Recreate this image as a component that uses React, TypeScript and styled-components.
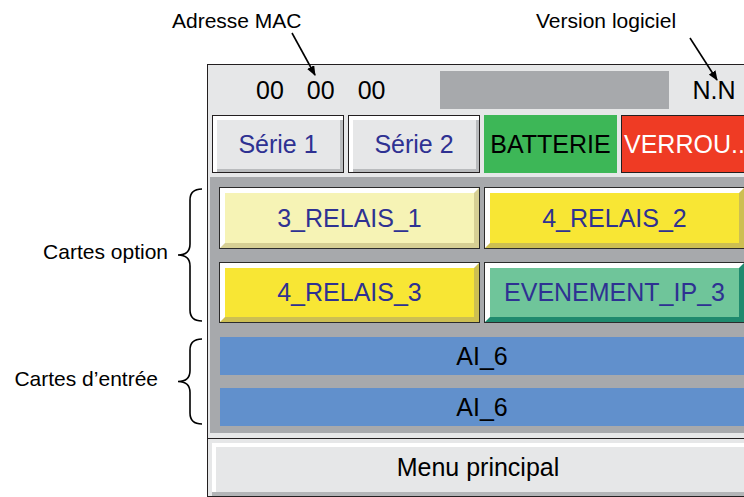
import styled, { createGlobalStyle } from "styled-components"

const Colors = {
    Screen: "#e6e7e8",
    Panel: "#a7a9ac",
    Line: "#231f20",
    Navy: "#2e3192",
    PaleYellow: "#f6f3b5",
    PaleYellowShade: "#d6cf94",
    Yellow: "#f8e634",
    YellowShade: "#cdbf52",
    Teal: "#6fc59a",
    TealShade: "#1f8a6e",
    Blue: "#6190cc",
    Green: "#3db757",
    Red: "#ef3b24",
    White: "#ffffff",
}

interface CardData {
    label: string
    fill: string
    shade: string
}

const optionCards: CardData[] = [
    { label: "3_RELAIS_1", fill: Colors.PaleYellow, shade: Colors.PaleYellowShade },
    { label: "4_RELAIS_2", fill: Colors.Yellow, shade: Colors.YellowShade },
    { label: "4_RELAIS_3", fill: Colors.Yellow, shade: Colors.YellowShade },
    { label: "EVENEMENT_IP_3", fill: Colors.Teal, shade: Colors.TealShade },
]

const inputCards = ["AI_6", "AI_6"]

function Brace({ height }: { height: number }) {
    const mid = height / 2
    return (
        <svg width="27" height={height} viewBox={`0 0 27 ${height}`}>
            <path
                d={`M26 1 C18 1 14 4 14 12 L14 ${mid - 11} C14 ${mid - 4} 10 ${mid} 2 ${mid} C10 ${mid} 14 ${mid + 4} 14 ${mid + 11} L14 ${height - 12} C14 ${height - 4} 18 ${height - 1} 26 ${height - 1}`}
                fill="none"
                stroke="#000"
                strokeWidth="1.6"
            />
        </svg>
    )
}

function App() {
    return (
        <>
            <GlobalStyle />
            <Page>
                <Callouts>
                    <CalloutLabel $left={172}>Adresse MAC</CalloutLabel>
                    <CalloutLabel $left={536}>Version logiciel</CalloutLabel>
                    <Arrows width="744" height="90" viewBox="0 0 744 90">
                        <defs>
                            <marker id="head" markerWidth="10" markerHeight="8" refX="9" refY="4" orient="auto" markerUnits="userSpaceOnUse">
                                <path d="M0 0 L10 4 L0 8 Z" fill="#000" />
                            </marker>
                        </defs>
                        <line x1="292" y1="33" x2="315" y2="75" stroke="#000" strokeWidth="1.6" markerEnd="url(#head)" />
                        <line x1="690" y1="38" x2="717" y2="80" stroke="#000" strokeWidth="1.6" markerEnd="url(#head)" />
                    </Arrows>
                </Callouts>

                <SideNotes>
                    <NoteGroup $height={134} $gap={8}>
                        <NoteLabel>Cartes option</NoteLabel>
                        <Brace height={134} />
                    </NoteGroup>
                    <NoteGroup $height={87} $gap={18}>
                        <NoteLabel>Cartes d’entrée</NoteLabel>
                        <Brace height={87} />
                    </NoteGroup>
                </SideNotes>

                <Frame>
                    <TopBar>
                        <MacAddress>
                            <span>00</span>
                            <span>00</span>
                            <span>00</span>
                        </MacAddress>
                        <NameBar />
                        <Version>N.N</Version>
                    </TopBar>

                    <StatusRow>
                        <SerialButton>Série 1</SerialButton>
                        <SerialButton>Série 2</SerialButton>
                        <BatteryTag>BATTERIE</BatteryTag>
                        <LockTag>VERROU..</LockTag>
                    </StatusRow>

                    <CardPanel>
                        <OptionGrid>
                            {optionCards.map((card, i) => (
                                <OptionCard key={i} $fill={card.fill} $shade={card.shade} $tall={i < 2}>
                                    {card.label}
                                </OptionCard>
                            ))}
                        </OptionGrid>
                        <InputList>
                            {inputCards.map((label, i) => (
                                <InputCard key={i}>{label}</InputCard>
                            ))}
                        </InputList>
                    </CardPanel>

                    <Footer>
                        <MenuButton>Menu principal</MenuButton>
                        <FooterStrip />
                    </Footer>
                </Frame>
            </Page>
        </>
    )
}

export default App

const GlobalStyle = createGlobalStyle`
    html, body {
        margin: 0;
        padding: 0;
        background: #ffffff;
        overflow: hidden;
    }
    body {
        font-family: "Liberation Sans", Arial, sans-serif;
    }
`

const Page = styled.div`
    width: 744px;
    height: 497px;
    display: grid;
    grid-template-columns: 207px 548px;
    grid-template-rows: 64px 433px;
    overflow: hidden;
    position: relative;
`

const Callouts = styled.div`
    grid-column: 1 / -1;
    grid-row: 1;
    position: relative;
    z-index: 2;
`

const CalloutLabel = styled.div<{ $left: number }>`
    position: absolute;
    top: 9px;
    left: ${(p) => p.$left}px;
    font-size: 21px;
    line-height: 24px;
    color: #000;
    white-space: nowrap;
`

const Arrows = styled.svg`
    position: absolute;
    top: 0;
    left: 0;
    pointer-events: none;
`

const SideNotes = styled.div`
    grid-column: 1;
    grid-row: 2;
    display: flex;
    flex-direction: column;
    padding-top: 124px;
    gap: 16px;
`

const NoteGroup = styled.div<{ $height: number; $gap: number }>`
    height: ${(p) => p.$height}px;
    display: flex;
    align-items: center;
    justify-content: flex-end;
    gap: ${(p) => p.$gap}px;
    padding-right: 4px;
`

const NoteLabel = styled.div`
    font-size: 21px;
    color: #000;
    white-space: nowrap;
    margin-top: -6px;
`

const Frame = styled.div`
    grid-column: 2;
    grid-row: 2;
    border: 1px solid ${Colors.Line};
    border-right: none;
    background: ${Colors.Screen};
    display: flex;
    flex-direction: column;
`

const TopBar = styled.div`
    height: 48px;
    display: flex;
    align-items: center;
    padding-left: 48px;
    font-size: 25px;
    color: #000;
`

const MacAddress = styled.div`
    display: flex;
    gap: 23px;
    padding-top: 3px;
`

const NameBar = styled.div`
    width: 229px;
    height: 38px;
    margin-left: 55px;
    margin-top: 2px;
    background: ${Colors.Panel};
`

const Version = styled.div`
    margin-left: 23px;
    padding-top: 3px;
`

const StatusRow = styled.div`
    display: grid;
    grid-template-columns: 132px 132px 133px 133px;
    grid-auto-rows: 58px;
    gap: 4px;
    padding: 2px 0 0 4px;
    font-size: 25px;
`

const SerialButton = styled.div`
    display: flex;
    align-items: center;
    justify-content: center;
    border: 1px solid ${Colors.Line};
    box-shadow: inset 4px 4px 0 ${Colors.White}, inset -3px -3px 0 #b9bbbd;
    background: ${Colors.Screen};
    color: ${Colors.Navy};
`

const BatteryTag = styled.div`
    display: flex;
    align-items: center;
    justify-content: center;
    background: ${Colors.Green};
    color: #000;
`

const LockTag = styled.div`
    display: flex;
    align-items: center;
    padding-left: 2px;
    border: 1px solid ${Colors.Line};
    background: ${Colors.Red};
    color: ${Colors.White};
    white-space: nowrap;
`

const CardPanel = styled.div`
    margin: 4px 0 0 2px;
    padding: 11px 10px 7px 10px;
    background: ${Colors.Panel};
    display: flex;
    flex-direction: column;
    gap: 15px;
`

const OptionGrid = styled.div`
    display: grid;
    grid-template-columns: 259px 259px;
    column-gap: 6px;
    row-gap: 15px;
`

const OptionCard = styled.div<{ $fill: string; $shade: string; $tall: boolean }>`
    box-sizing: border-box;
    height: ${(p) => (p.$tall ? 60 : 59)}px;
    display: flex;
    align-items: center;
    justify-content: center;
    background: ${(p) => p.$fill};
    border: 5px solid;
    border-color: ${Colors.White} ${(p) => p.$shade} ${(p) => p.$shade} ${Colors.White};
    box-shadow: 0 0 0 1px #2b2b2b;
    color: ${Colors.Navy};
    font-size: 25px;
`

const InputList = styled.div`
    display: flex;
    flex-direction: column;
    gap: 13px;
`

const InputCard = styled.div`
    height: 38px;
    width: 524px;
    display: flex;
    align-items: center;
    justify-content: center;
    background: ${Colors.Blue};
    color: #000;
    font-size: 25px;
`

const Footer = styled.div`
    margin-top: 5px;
    border-top: 1px solid ${Colors.Line};
    padding: 4px 0 0 4px;
    display: flex;
    flex-direction: column;
    flex: 1;
`

const MenuButton = styled.div`
    box-sizing: border-box;
    width: 532px;
    height: 49px;
    display: flex;
    align-items: center;
    justify-content: center;
    background: ${Colors.Screen};
    box-shadow: inset 4px 4px 0 ${Colors.White};
    color: #000;
    font-size: 25px;
`

const FooterStrip = styled.div`
    flex: 1;
    background: #b3b5b7;
`
